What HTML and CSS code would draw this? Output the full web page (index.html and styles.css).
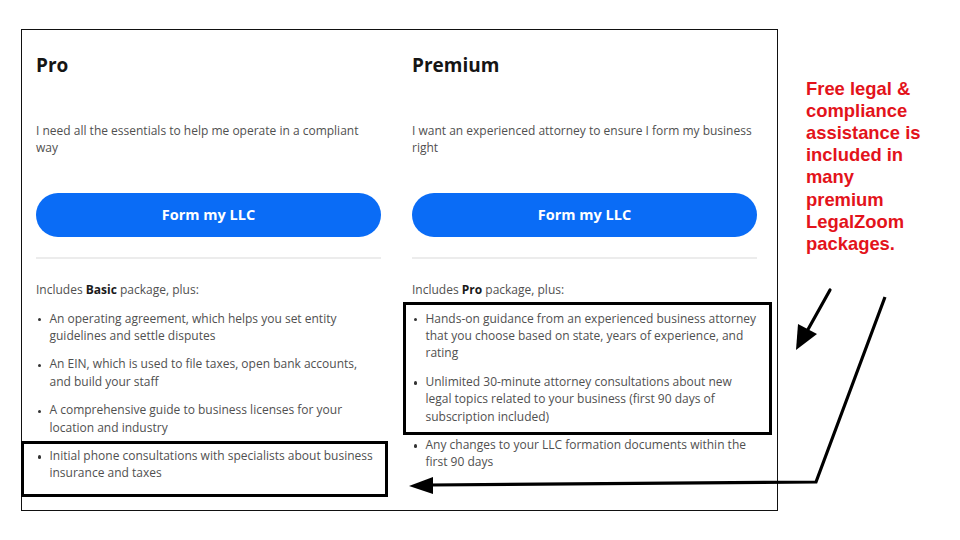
FILE: index.html
```html
<!DOCTYPE html>
<html lang="en">
<head>
<meta charset="utf-8">
<title>LLC packages</title>
<link rel="stylesheet" href="styles.css">
</head>
<body>
<div class="page">
  <div class="card">
    <section class="col">
      <h2 class="plan-title">Pro</h2>
      <p class="plan-desc">I need all the essentials to help me operate in a compliant way</p>
      <button class="cta">Form my LLC</button>
      <hr class="divider">
      <p class="includes">Includes <b>Basic</b> package, plus:</p>
      <ul class="features">
        <li>An operating agreement, which helps you set entity guidelines and settle disputes</li>
        <li>An EIN, which is used to file taxes, open bank accounts, and build your staff</li>
        <li>A comprehensive guide to business licenses for your location and industry</li>
        <li>Initial phone consultations with specialists about business insurance and taxes</li>
      </ul>
    </section>
    <section class="col">
      <h2 class="plan-title">Premium</h2>
      <p class="plan-desc">I want an experienced attorney to ensure I form my business right</p>
      <button class="cta">Form my LLC</button>
      <hr class="divider">
      <p class="includes">Includes <b>Pro</b> package, plus:</p>
      <ul class="features">
        <li>Hands-on guidance from an experienced business attorney that you choose based on state, years of experience, and rating</li>
        <li>Unlimited 30-minute attorney consultations about new legal topics related to your business (first 90 days of subscription included)</li>
        <li>Any changes to your LLC formation documents within the first 90 days</li>
      </ul>
    </section>
  </div>
  <p class="note">Free legal &amp; compliance assistance is included in many premium LegalZoom packages.</p>

  <svg class="annotations" width="960" height="540" viewBox="0 0 960 540" aria-hidden="true">
    <rect x="404.5" y="303.5" width="366" height="130" fill="none" stroke="#000" stroke-width="3"/>
    <rect x="22.5" y="442.5" width="364" height="53" fill="none" stroke="#000" stroke-width="3"/>
    <line x1="830" y1="290" x2="806" y2="333" stroke="#000" stroke-width="3.2" stroke-linecap="round"/>
    <polygon points="796,350 798,324 817,334" fill="#000"/>
    <polyline points="885,297 816,482 430,485" fill="none" stroke="#000" stroke-width="3.2" stroke-linejoin="miter"/>
    <polygon points="409,486 433,477 433,494" fill="#000"/>
  </svg>
</div>
</body>
</html>
```

FILE: styles.css
```css
html, body {
  margin: 0;
  padding: 0;
  background: #ffffff;
}

.page {
  position: relative;
  width: 960px;
  height: 540px;
  display: flex;
  align-items: flex-start;
  padding: 29px 0 0 21px;
  box-sizing: border-box;
  font-family: "Open Sans", "Noto Sans", sans-serif;
}

.card {
  box-sizing: border-box;
  width: 757px;
  height: 482px;
  border: 1px solid #111;
  padding: 23px 20px 0 14px;
  display: grid;
  grid-template-columns: 345px 345px;
  column-gap: 31px;
}

.col {
  display: flex;
  flex-direction: column;
  min-width: 0;
}

.plan-title {
  margin: 0;
  font-size: 19px;
  line-height: 25px;
  font-weight: 700;
  color: #151515;
}

.plan-desc {
  margin: 43.6px 0 0;
  font-size: 12px;
  line-height: 17.5px;
  color: #505050;
  height: 35px;
}

.cta {
  margin: 36.4px 0 0;
  height: 44px;
  width: 100%;
  border: none;
  border-radius: 22px;
  background: #0a6cf6;
  color: #ffffff;
  font-family: "Open Sans", "Noto Sans", sans-serif;
  font-size: 14.5px;
  font-weight: 700;
  padding: 0;
}

.divider {
  margin: 20.5px 0 0;
  height: 2px;
  border: none;
  background: #ececec;
}

.includes {
  margin: 21.6px 0 0;
  font-size: 12px;
  line-height: 17.5px;
  color: #505050;
}

.includes b {
  color: #1a1a1a;
  font-weight: 700;
}

.features {
  list-style: none;
  margin: 11px 0 0;
  padding: 0;
  width: 345px;
}

.features li {
  display: flex;
  align-items: flex-start;
  font-size: 12px;
  line-height: 17.4px;
  color: #505050;
  margin-bottom: 11px;
}

.features li::before {
  content: "";
  flex: none;
  width: 3.4px;
  height: 3.4px;
  border-radius: 50%;
  background: #333333;
  margin: 8.4px 8.3px 0 1.8px;
}

.note {
  margin: 48.5px 0 0 28px;
  width: 122px;
  font-family: "Liberation Sans", Arial, sans-serif;
  font-size: 18.4px;
  line-height: 22.2px;
  font-weight: 700;
  color: #e3131b;
}

.annotations {
  position: absolute;
  left: 0;
  top: 0;
  pointer-events: none;
}
```
